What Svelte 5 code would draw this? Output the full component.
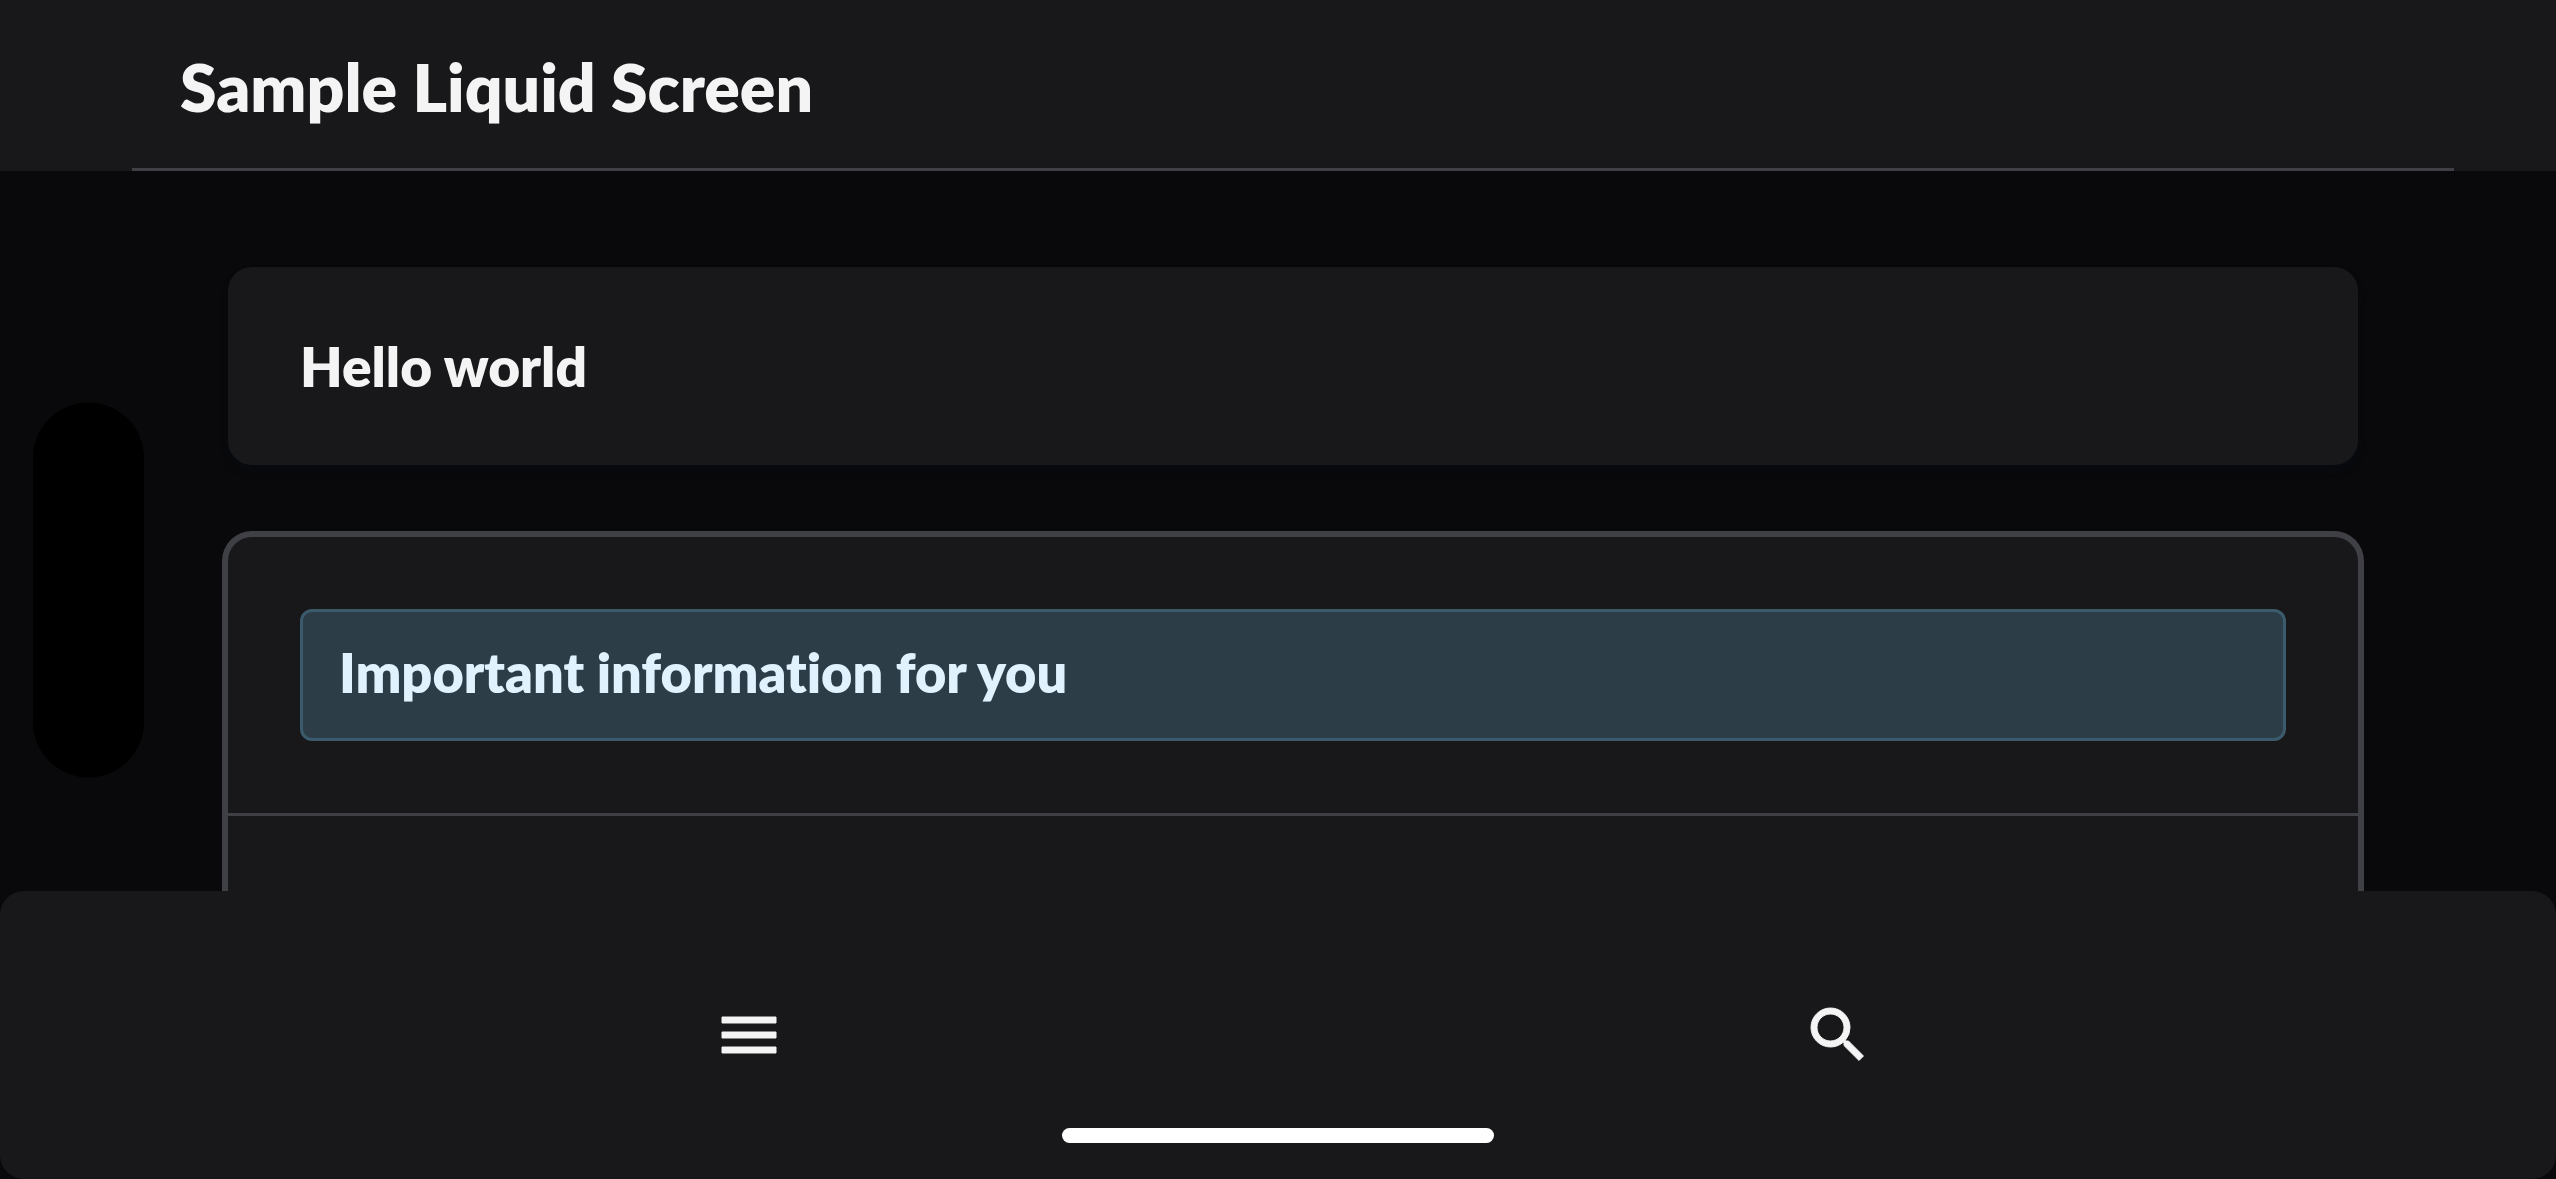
<script>
  const title = 'Sample Liquid Screen';
</script>

<div class="screen">
  <header>
    <h1>{title}</h1>
  </header>

  <main>
    <section class="card raised">
      <h2>Hello world</h2>
    </section>

    <section class="card outlined">
      <div class="cell">
        <p class="notice" role="status">Important information for you</p>
      </div>
      <hr />
    </section>
  </main>

  <nav aria-label="Main">
    <button type="button" aria-label="Menu">
      <svg viewBox="0 0 24 24" aria-hidden="true">
        <path d="M3 18h18v-2H3v2zm0-5h18v-2H3v2zm0-7v2h18V6H3z" />
      </svg>
    </button>
    <button type="button" aria-label="Search">
      <svg viewBox="0 0 24 24" aria-hidden="true">
        <path
          d="M15.5 14h-.79l-.28-.27A6.471 6.471 0 0 0 16 9.5 6.5 6.5 0 1 0 9.5 16c1.61 0 3.09-.59 4.23-1.57l.27.28v.79l5 4.99L20.49 19l-4.99-5zm-6 0C7.01 14 5 11.99 5 9.5S7.01 5 9.5 5 14 7.01 14 9.5 11.99 14 9.5 14z"
        />
      </svg>
    </button>
  </nav>

  <div class="island"></div>
  <div class="home-indicator"></div>
</div>

<style>
  :global(body) {
    background: #09090b;
  }

  .screen {
    position: relative;
    display: flex;
    flex-direction: column;
    height: 100vh;
    overflow: hidden;
    color: #f4f4f5;
    background: #09090b;
    font-family: Lato, sans-serif;
    font-variant-ligatures: none;
  }

  h1,
  h2,
  p {
    margin: 0;
    font-weight: 800;
  }

  header {
    flex: none;
    padding: 0 102px 0 132px;
    background: #18181b;
  }

  h1 {
    padding: 51px 48px 45px;
    border-bottom: 3px solid #3f3f46;
    font-size: 66px;
    line-height: 72px;
  }

  main {
    flex: 1;
    min-height: 0;
    display: flex;
    flex-direction: column;
    gap: 66px;
    padding: 96px 192px 0 222px;
    overflow: hidden;
  }

  .card {
    background: #18181b;
  }

  .raised {
    flex: none;
    margin: 0 6px;
    padding: 63px 72px;
    border-radius: 24px;
    box-shadow: 0 6px 6px #080a10;
  }

  h2,
  .notice {
    line-height: 72px;
  }

  h2 {
    font-size: 55px;
  }

  .outlined {
    flex: 1;
    border: 6px solid #3f3f46;
    border-bottom: 0;
    border-radius: 30px 30px 0 0;
  }

  .cell {
    padding: 72px;
  }

  .notice {
    padding: 25px 36px 29px;
    border: 3px solid #3b5a6b;
    border-radius: 12px;
    color: #e0f2fe;
    background: #2c3d47;
    font-size: 54px;
  }

  hr {
    height: 3px;
    margin: 0;
    border: 0;
    background: #3f3f46;
  }

  nav {
    flex: none;
    display: flex;
    padding: 90px 174px 90px 204px;
    border-radius: 24px;
    background: #18181b;
  }

  button {
    flex: 1;
    display: flex;
    align-items: center;
    justify-content: center;
    height: 108px;
    padding: 0;
    border: 0;
    color: #f4f4f5;
    background: none;
  }

  svg {
    width: 72px;
    height: 72px;
    fill: currentColor;
    stroke: currentColor;
    stroke-width: 0.33;
  }

  .island {
    position: absolute;
    top: 50%;
    left: 33px;
    width: 111px;
    height: 375px;
    transform: translateY(-50%);
    border-radius: 56px;
    background: #000;
  }

  .home-indicator {
    position: absolute;
    bottom: 36px;
    left: 50%;
    width: 432px;
    height: 15px;
    transform: translateX(-50%);
    border-radius: 8px;
    background: #fff;
  }
</style>
